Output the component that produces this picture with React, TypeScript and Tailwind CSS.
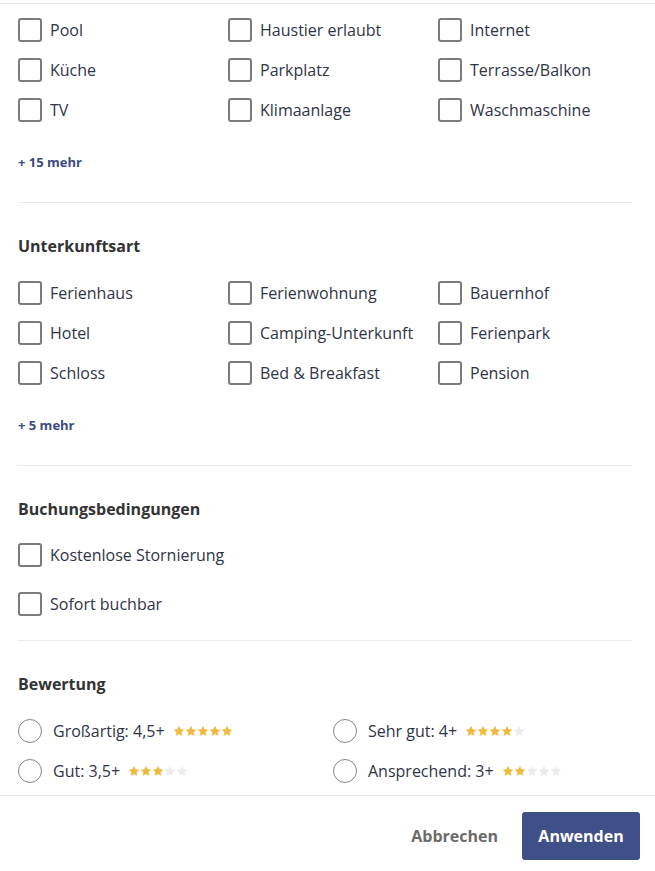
import React from 'react';

const amenities = [
  'Pool', 'Haustier erlaubt', 'Internet',
  'Küche', 'Parkplatz', 'Terrasse/Balkon',
  'TV', 'Klimaanlage', 'Waschmaschine',
];

const types = [
  'Ferienhaus', 'Ferienwohnung', 'Bauernhof',
  'Hotel', 'Camping-Unterkunft', 'Ferienpark',
  'Schloss', 'Bed & Breakfast', 'Pension',
];

const ratings = [
  { label: 'Großartig: 4,5+', stars: 5 },
  { label: 'Sehr gut: 4+', stars: 4 },
  { label: 'Gut: 3,5+', stars: 3 },
  { label: 'Ansprechend: 3+', stars: 2 },
];

const Checkbox = ({ label }: { label: string }) => (
  <label className="flex items-center gap-2 h-6">
    <span className="w-6 h-6 shrink-0 rounded-[3px] border-2 border-[#7b7b7b] bg-white" />
    <span className="text-base leading-6 text-[#2f3447]">{label}</span>
  </label>
);

const Star = ({ on }: { on: boolean }) => (
  <svg width="12" height="12" viewBox="0 0 24 24" className={on ? 'fill-[#efb93e]' : 'fill-[#ececec]'}>
    <path d="M12 1.5l3.2 6.9 7.5.9-5.6 5.1 1.5 7.4L12 18.1l-6.6 3.7 1.5-7.4L1.3 9.3l7.5-.9z" />
  </svg>
);

const Section = ({ title, children }: { title?: string; children: React.ReactNode }) => (
  <div className="pt-[31px] pb-[31px] border-b border-[#ebebeb]">
    {title && <h3 className="font-bold text-base leading-6 text-[#333] mb-[23px]">{title}</h3>}
    {children}
  </div>
);

const More = ({ text }: { text: string }) => (
  <div className="mt-[31px] text-[13px] leading-[18px] font-bold text-[#3b4a7e]">{text}</div>
);

export default function App() {
  return (
    <div className="w-[655px] h-[871px] bg-white flex flex-col font-['Open_Sans',sans-serif] overflow-hidden">
      <div className="mt-[3px] border-t border-[#ebebeb] flex-1 pl-[18px] pr-[23px]">
        <div className="pt-[14px] pb-[31px] border-b border-[#ebebeb]">
          <div className="grid grid-cols-[210px_210px_1fr] gap-y-4">
            {amenities.map((a) => <Checkbox key={a} label={a} />)}
          </div>
          <More text="+ 15 mehr" />
        </div>

        <Section title="Unterkunftsart">
          <div className="grid grid-cols-[210px_210px_1fr] gap-y-4">
            {types.map((a) => <Checkbox key={a} label={a} />)}
          </div>
          <More text="+ 5 mehr" />
        </Section>

        <div className="pt-[31px] pb-[24px] border-b border-[#ebebeb]">
          <h3 className="font-bold text-base leading-6 text-[#333] mb-[22px]">Buchungsbedingungen</h3>
          <div className="flex flex-col gap-[25px]">
            <Checkbox label="Kostenlose Stornierung" />
            <Checkbox label="Sofort buchbar" />
          </div>
        </div>

        <div className="pt-[31px]">
          <h3 className="font-bold text-base leading-6 text-[#333] mb-[23px]">Bewertung</h3>
          <div className="grid grid-cols-[315px_1fr] gap-y-4">
            {ratings.map((r) => (
              <label key={r.label} className="flex items-center h-6">
                <span className="w-6 h-6 shrink-0 rounded-full border-[1.5px] border-[#858585] bg-white" />
                <span className="ml-[11px] text-base leading-6 text-[#2f3447]">{r.label}</span>
                <span className="ml-2 flex items-center">
                  {[0, 1, 2, 3, 4].map((i) => <Star key={i} on={i < r.stars} />)}
                </span>
              </label>
            ))}
          </div>
        </div>
      </div>

      <div className="h-[76px] shrink-0 border-t border-[#ebebeb] flex items-start justify-end pt-4 pr-[15px]">
        <button className="h-12 px-4 mr-2 text-base font-bold text-[#6b6b6b]">Abbrechen</button>
        <button className="h-12 w-[118px] rounded-[3px] bg-[#3f5088] text-base font-bold text-white">Anwenden</button>
      </div>
    </div>
  );
}
